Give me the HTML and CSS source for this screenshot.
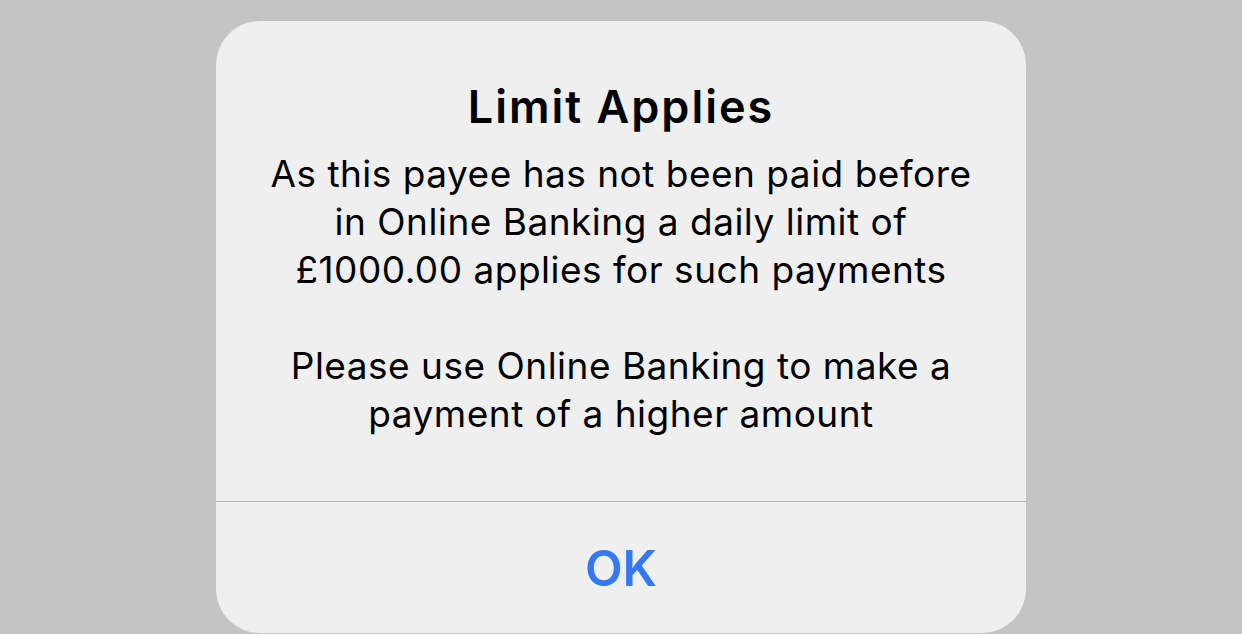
FILE: index.html
```html
<!DOCTYPE html>
<html>
<head>
<meta charset="utf-8">
<link rel="stylesheet" href="styles.css">
</head>
<body>
<div class="alert">
  <div class="content">
    <h1 class="title">Limit Applies</h1>
    <p class="message">As this payee has not been paid before<br>in Online Banking a daily limit of<br>£1000.00 applies for such payments</p>
    <p class="message second">Please use Online Banking to make a<br>payment of a higher amount</p>
  </div>
  <div class="actions">
    <button class="btn">OK</button>
  </div>
</div>
</body>
</html>
```
FILE: styles.css
```css
html, body {
  margin: 0;
  padding: 0;
  height: 100%;
  overflow: hidden;
}
body {
  background: #c4c4c4;
  display: flex;
  justify-content: center;
  padding-top: 21px;
  box-sizing: border-box;
  font-family: Inter, "Noto Sans", sans-serif;
}
.alert {
  width: 810px;
  height: 612px;
  background: #efefef;
  border-radius: 44px;
  display: flex;
  flex-direction: column;
  overflow: hidden;
}
.content {
  flex: 0 0 481px;
  box-sizing: border-box;
  padding-top: 60px;
  text-align: center;
  color: #000;
  border-bottom: 1px solid #b4b4b4;
}
.title {
  margin: 0 0 17px;
  font-size: 45px;
  font-weight: 600;
  line-height: 52px;
  letter-spacing: 2px;
}
.message {
  margin: 0;
  font-size: 37px;
  font-weight: 400;
  line-height: 48px;
  letter-spacing: 0.5px;
}
.message.second {
  margin-top: 48px;
}
.actions {
  flex: 1;
  display: flex;
  align-items: center;
  justify-content: center;
}
.btn {
  border: 0;
  background: none;
  font-family: inherit;
  font-size: 49px;
  font-weight: 600;
  color: #3478f6;
  padding: 0;
  margin-top: 2px;
}
```
